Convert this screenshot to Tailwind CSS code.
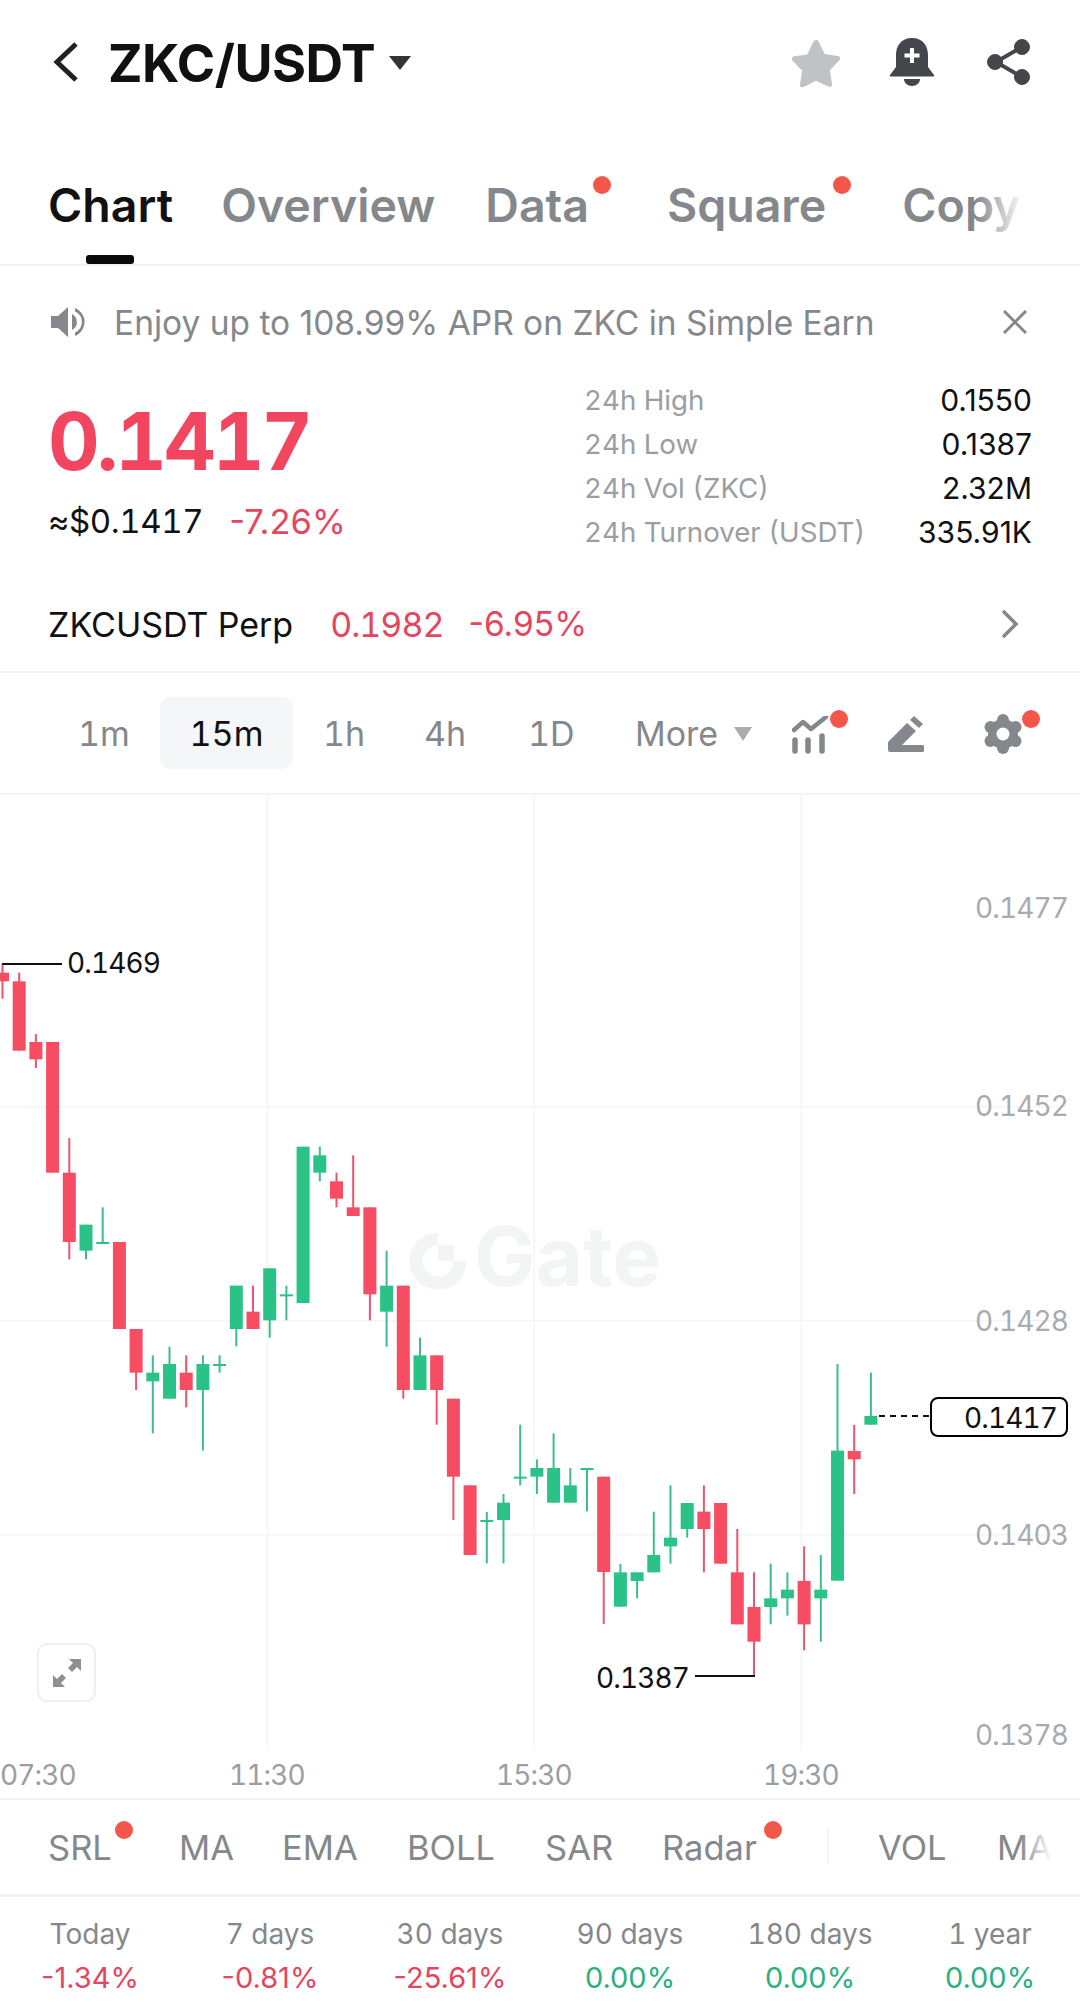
<!DOCTYPE html>
<html lang="en">
  <head>
    <meta charset="UTF-8" />
    <meta name="viewport" content="width=device-width, initial-scale=1.0" />
    <title>ZKC/USDT</title>
    <script src="https://cdn.jsdelivr.net/npm/@tailwindcss/browser@4"></script>
  </head>
  <body class="bg-white font-[Inter,sans-serif] text-[#111] tabular-nums">
    <div class="w-[1080px] h-[2002px] overflow-hidden">
      <!-- Header -->
      <div class="h-[124px] flex items-center pl-[52px] pr-[48px]">
        <svg width="28" height="42" viewBox="0 0 28 42" fill="none" stroke="#222" stroke-width="5"><path d="M24 3 L5 21 L24 39" /></svg>
        <span class="ml-[28px] mt-[3px] text-[52px] font-bold tracking-[-0.5px]">ZKC/USDT</span>
        <svg class="ml-[13px] mt-[2px]" width="24" height="16" viewBox="0 0 24 16" fill="#333"><path d="M1 1 H23 L12 15 Z" /></svg>
        <svg class="ml-auto" width="52" height="50" viewBox="0 0 24 23" fill="#c0c3c6"><path d="M12 1.2c.6 0 1 .4 1.300.9l2.700 5.700 6 .9c1.200.2 1.500 1.300.8 2l-4.400 4.600 1 6.300c.2 1.100-.8 1.700-1.700 1.200L12 20.100l-5.700 2.900c-.9.500-1.900-.1-1.700-1.200l1-6.300-4.400-4.600c-.7-.7-.4-1.800.8-2l6-.9 2.700-5.700c.3-.5.700-.9 1.300-.9z" /></svg>
        <svg class="ml-[48px]" width="44" height="48" viewBox="0 0 44 48">
          <path fill="#44464c" d="M22 0C11 0 6 8 6 17v12L0 37c-.5 1 0 1.500 1 1.500h42c1 0 1.500-.5 1-1.500l-6-8V17C38 8 33 0 22 0z" />
          <path fill="#44464c" d="M14 41h16c0 4-3.500 7-8 7s-8-3-8-7z" />
          <path fill="#fff" d="M20 10h4v5.500h5.500v4H24V25h-4v-5.500h-5.500v-4H20z" />
        </svg>
        <svg class="ml-[52px]" width="46" height="48" viewBox="0 0 46 48" fill="#44464c" stroke="#44464c">
          <path d="M36 9 L10 24 L36 39" fill="none" stroke-width="4" />
          <circle cx="36" cy="9" r="7.500" /><circle cx="9" cy="24" r="7.500" /><circle cx="36" cy="39" r="7.500" />
        </svg>
      </div>

      <!-- Tabs -->
      <div class="relative h-[142px] border-b-2 border-[#f2f3f4] pl-[48px] pt-[55px] flex items-start text-[46.500px] leading-[52px] font-semibold text-[#84888c] overflow-hidden">
        <span class="text-[#111]">Chart</span>
        <span class="ml-[48px]">Overview</span>
        <span class="ml-[50px] relative">Data<i class="absolute left-[108px] top-[-3px] w-[18px] h-[18px] rounded-full bg-[#f5564a]"></i></span>
        <span class="ml-[78px] relative">Square<i class="absolute left-[166px] top-[-3px] w-[18px] h-[18px] rounded-full bg-[#f5564a]"></i></span>
        <span class="ml-[76px]">Copy</span>
        <div class="absolute left-[975px] top-[40px] w-[50px] h-[80px] bg-gradient-to-r from-white/0 to-white"></div>
        <div class="absolute right-0 top-[40px] w-[55px] h-[80px] bg-white"></div>
        <div class="absolute left-[86px] bottom-0 w-[48px] h-[9px] rounded-[3px] bg-[#0a0a0a]"></div>
      </div>

      <!-- Notice -->
      <div class="h-[112px] flex items-center pl-[51px] pr-[53px] text-[#84888c]">
        <svg width="36" height="32" viewBox="0 0 36 32" fill="#84888c">
          <path d="M0 10h7L17 1v30L7 22H0z" />
          <path d="M21 8a9 9 0 0 1 0 16z" />
          <path d="M24 2a15 15 0 0 1 0 28v-3.500a11.500 11.500 0 0 0 0-21z" />
        </svg>
        <span class="ml-[27px] mt-[3px] text-[33.500px] normal-nums">Enjoy up to 108.99% APR on ZKC in Simple Earn</span>
        <svg class="ml-auto" width="24" height="24" viewBox="0 0 24 24" stroke="#84888c" stroke-width="3"><path d="M1 1 L23 23 M23 1 L1 23" /></svg>
      </div>

      <!-- Price block -->
      <div class="h-[200px] flex justify-between pl-[48px] pr-[48px]">
        <div>
          <div class="mt-[18px] h-[90px] leading-[90px] text-[80px] font-bold tracking-[-3px] text-[#f2455f]">0.1417</div>
          <div class="mt-[16px] h-[40px] flex items-center text-[33px]">
            <span class="tracking-[-0.4px]">≈$0.1417</span>
            <span class="ml-[26px] text-[34.500px] normal-nums text-[#e4465f]">-7.26%</span>
          </div>
        </div>
        <div class="w-[448px] text-[30px] leading-[44px] normal-nums">
          <div class="flex justify-between"><span class="text-[27.700px] tabular-nums text-[#9a9ea3]">24h High</span><span>0.1550</span></div>
          <div class="flex justify-between"><span class="text-[27.700px] tabular-nums text-[#9a9ea3]">24h Low</span><span>0.1387</span></div>
          <div class="flex justify-between"><span class="text-[27.700px] tabular-nums text-[#9a9ea3]">24h Vol (ZKC)</span><span>2.32M</span></div>
          <div class="flex justify-between"><span class="text-[27.700px] tabular-nums text-[#9a9ea3]">24h Turnover (USDT)</span><span>335.91K</span></div>
        </div>
      </div>

      <!-- Perp row -->
      <div class="h-[95px] flex items-center pl-[48px] pr-[60px] pb-[1px] border-b-2 border-[#f2f3f4] text-[34px]">
        <span>ZKCUSDT Perp</span>
        <span class="ml-[37px] tracking-[-1px] text-[#e4465f]">0.1982</span>
        <span class="ml-[25px] text-[33.500px] normal-nums text-[#e4465f]">-6.95%</span>
        <svg class="ml-auto" width="20" height="30" viewBox="0 0 20 30" fill="none" stroke="#84888c" stroke-width="3.500"><path d="M3 2 L16 15 L3 28" /></svg>
      </div>

      <!-- Timeframes -->
      <div class="relative h-[122px] flex items-center border-b-2 border-[#f2f3f4] text-[34px] text-[#84888c]">
        <span class="absolute left-[78px]">1m</span>
        <span class="absolute left-[160px] top-[24px] w-[133px] h-[72px] rounded-[10px] bg-[#f5f6f7] text-[#111] flex items-center justify-center">15m</span>
        <span class="absolute left-[323px]">1h</span>
        <span class="absolute left-[424px]">4h</span>
        <span class="absolute left-[528px]">1D</span>
        <span class="absolute left-[635px]">More</span>
        <svg class="absolute left-[734px] top-[54px]" width="18" height="14" viewBox="0 0 18 14" fill="#a9acb0"><path d="M0 0 H18 L9 14 Z" /></svg>
        <svg class="absolute left-[792px] top-[43px]" width="38" height="38" viewBox="0 0 38 38" fill="none" stroke="#84888c" stroke-linecap="round" stroke-linejoin="round">
          <path d="M2 14 L11 6 L19 13 L34 1" stroke-width="4.500" />
          <path d="M3 24 V35 M16 24 V35 M30 20 V35" stroke-width="5.500" />
        </svg>
        <i class="absolute left-[830px] top-[37px] w-[18px] h-[18px] rounded-full bg-[#f5564a]"></i>
        <svg class="absolute left-[888px] top-[43px]" width="36" height="37" viewBox="0 0 36 37" fill="#84888c">
          <path d="M22 4 L26 0 L35 8 L31 12 Z" />
          <path d="M19 7 L28 15 L14 29 H0 V26 Z" />
          <path d="M18 29 H34 a2.500 2.500 0 0 1 0 7 H2 a2 2 0 0 1 -2 -2 V29 Z" />
        </svg>
        <svg class="absolute left-[984px] top-[41px]" width="38" height="40" viewBox="0 0 38 40" fill="#84888c">
          <circle cx="19" cy="20" r="15" />
          <circle cx="19" cy="6" r="6" /><circle cx="19" cy="34" r="6" />
          <circle cx="6.500" cy="13" r="6" /><circle cx="31.500" cy="13" r="6" />
          <circle cx="6.500" cy="27" r="6" /><circle cx="31.500" cy="27" r="6" />
          <circle cx="19" cy="20" r="6.500" fill="#fff" />
        </svg>
        <i class="absolute left-[1022px] top-[37px] w-[18px] h-[18px] rounded-full bg-[#f5564a]"></i>
      </div>

      <!-- Chart canvas -->
      <div class="relative h-[1003px] overflow-hidden text-[28px] tracking-[-0.9px]">
        <svg id="chart" class="absolute left-0 top-0" width="1080" height="1003" viewBox="0 795 1080 1003"></svg>

        <!-- Watermark -->
        <svg class="absolute left-[408px] top-[437px]" width="60" height="58" viewBox="0 0 60 58" fill="none">
          <path d="M30 7 A22 22 0 1 0 52 29" stroke="#f3f4f5" stroke-width="13" />
          <rect x="30" y="13" width="16" height="16" fill="#f3f4f5" />
        </svg>
        <span class="absolute left-[474px] top-[412px] text-[82px] leading-[100px] font-bold tracking-normal text-[#f3f4f5]">Gate</span>

        <!-- Y axis -->
        <span class="absolute right-[12px] top-[92px] text-[#a8abaf]">0.1477</span>
        <span class="absolute right-[12px] top-[290px] text-[#a8abaf]">0.1452</span>
        <span class="absolute right-[12px] top-[505px] text-[#a8abaf]">0.1428</span>
        <span class="absolute right-[12px] top-[719px] text-[#a8abaf]">0.1403</span>
        <span class="absolute right-[12px] top-[919px] text-[#a8abaf]">0.1378</span>

        <!-- X axis -->
        <span class="absolute left-[0px] top-[959px] text-[#9a9ea3]">07:30</span>
        <span class="absolute left-[229px] top-[959px] text-[#9a9ea3]">11:30</span>
        <span class="absolute left-[496px] top-[959px] text-[#9a9ea3]">15:30</span>
        <span class="absolute left-[763px] top-[959px] text-[#9a9ea3]">19:30</span>

        <!-- Annotations -->
        <span class="absolute left-[67px] top-[147px]">0.1469</span>
        <span class="absolute left-[596px] top-[862px]">0.1387</span>
        <div class="absolute left-[930px] top-[602px] w-[138px] h-[40px] border-2 border-black rounded-[8px] flex items-center justify-end pr-[9px] pt-[1px]">0.1417</div>

        <!-- Expand -->
        <div class="absolute left-[37px] top-[848px] w-[59px] h-[59px] border-2 border-[#efefef] rounded-[10px] flex items-center justify-center">
          <svg width="30" height="30" viewBox="0 0 30 30" fill="#8c8f93">
            <path d="M17 1 H29 V13 L25 9 L20 14 L16 10 L21 5 Z" />
            <path d="M13 29 H1 V17 L5 21 L10 16 L14 20 L9 25 Z" />
          </svg>
        </div>
      </div>

      <!-- Indicators -->
      <div class="relative h-[99px] border-t-2 border-b-[3px] border-[#f2f3f4] text-[34.500px] text-[#84888c] overflow-hidden">
        <span class="absolute left-[48px] top-[22px]">SRL</span>
        <i class="absolute left-[115px] top-[21px] w-[18px] h-[18px] rounded-full bg-[#f5564a]"></i>
        <span class="absolute left-[179px] top-[22px]">MA</span>
        <span class="absolute left-[282px] top-[22px]">EMA</span>
        <span class="absolute left-[407px] top-[22px]">BOLL</span>
        <span class="absolute left-[545px] top-[22px]">SAR</span>
        <span class="absolute left-[662px] top-[22px]">Radar</span>
        <i class="absolute left-[764px] top-[21px] w-[18px] h-[18px] rounded-full bg-[#f5564a]"></i>
        <div class="absolute left-[827px] top-[28px] w-[2px] h-[36px] bg-[#f2f3f4]"></div>
        <span class="absolute left-[878px] top-[22px]">VOL</span>
        <span class="absolute left-[997px] top-[22px]">MA</span>
        <div class="absolute left-[1020px] top-[18px] w-[32px] h-[52px] bg-gradient-to-r from-white/0 to-white"></div>
        <div class="absolute left-[1052px] top-[18px] w-[28px] h-[52px] bg-white"></div>
      </div>

      <!-- Period changes -->
      <div class="grid grid-cols-6 pt-[15px] text-center text-[28px] leading-[44px]">
        <div><div class="text-[#84888c]">Today</div><div class="text-[29px] normal-nums text-[#e4465f]">-1.34%</div></div>
        <div><div class="text-[#84888c]">7 days</div><div class="text-[29px] normal-nums text-[#e4465f]">-0.81%</div></div>
        <div><div class="text-[#84888c]">30 days</div><div class="text-[29px] normal-nums text-[#e4465f]">-25.61%</div></div>
        <div><div class="text-[#84888c]">90 days</div><div class="text-[29px] normal-nums text-[#2bb07f]">0.00%</div></div>
        <div><div class="text-[#84888c]">180 days</div><div class="text-[29px] normal-nums text-[#2bb07f]">0.00%</div></div>
        <div><div class="text-[#84888c]">1 year</div><div class="text-[29px] normal-nums text-[#2bb07f]">0.00%</div></div>
      </div>
    </div>

    <script>
      // candles: [up, wickTop, bodyTop, bodyBottom, wickBottom], y in crop units (abs = 940 + v / 3)
      const candles = [
        [0, 72, 98, 124, 176], [0, 98, 124, 332, 332], [0, 282, 306, 358, 384], [0, 306, 306, 698, 698],
        [0, 594, 698, 906, 958], [1, 854, 854, 932, 958], [1, 802, 906, 906, 906], [0, 906, 906, 1167, 1167],
        [0, 1167, 1167, 1298, 1350], [1, 1246, 1298, 1324, 1480], [1, 1220, 1272, 1376, 1376], [0, 1246, 1298, 1350, 1402],
        [1, 1246, 1272, 1350, 1532], [1, 1246, 1272, 1272, 1298], [1, 1037, 1037, 1167, 1219], [0, 1037, 1115, 1167, 1167],
        [1, 985, 985, 1141, 1193], [1, 1037, 1063, 1063, 1141], [1, 620, 620, 1089, 1089], [1, 620, 646, 698, 724],
        [0, 698, 724, 776, 802], [0, 646, 802, 828, 828], [0, 802, 802, 1063, 1141], [1, 932, 1037, 1115, 1220],
        [0, 1037, 1037, 1350, 1376], [1, 1193, 1246, 1350, 1350], [0, 1246, 1246, 1350, 1454], [0, 1376, 1376, 1610, 1740],
        [0, 1636, 1636, 1845, 1845], [1, 1716, 1740, 1740, 1870], [1, 1662, 1688, 1740, 1870], [1, 1454, 1610, 1610, 1636],
        [1, 1558, 1584, 1610, 1662], [1, 1480, 1584, 1688, 1688], [1, 1584, 1636, 1688, 1688], [1, 1584, 1584, 1584, 1714],
        [0, 1610, 1610, 1896, 2052], [1, 1872, 1897, 2000, 2000], [1, 1897, 1897, 1923, 1975], [1, 1715, 1845, 1897, 1897],
        [1, 1636, 1793, 1819, 1871], [1, 1689, 1689, 1767, 1793], [0, 1636, 1715, 1767, 1897], [0, 1689, 1689, 1871, 1871],
        [0, 1767, 1897, 2053, 2053], [0, 1897, 2001, 2105, 2208], [1, 1871, 1975, 2001, 2053], [1, 1897, 1949, 1975, 2027],
        [0, 1819, 1923, 2053, 2131], [1, 1845, 1949, 1975, 2105], [1, 1272, 1532, 1922, 1922], [0, 1455, 1533, 1558, 1662],
        [1, 1298, 1428, 1454, 1454],
      ];
      const chart = document.getElementById("chart");
      const toY = (v) => 940 + v / 3;

      function add(tag, attrs) {
        const el = document.createElementNS("http://www.w3.org/2000/svg", tag);
        Object.entries(attrs).forEach(([k, v]) => el.setAttribute(k, v));
        chart.appendChild(el);
      }

      // grid
      [1106, 1320, 1534].forEach((y) => add("rect", { x: 0, y, width: 1067, height: 1.5, fill: "#f5f5f6" }));
      [266.7, 533.5, 800.5].forEach((x) => add("rect", { x, y: 795, width: 1.5, height: 955, fill: "#f5f5f6" }));

      candles.forEach(([up, wt, bt, bb, wb], i) => {
        const cx = 2.5 + 16.7 * i;
        const fill = up ? "#2bc287" : "#f74d63";
        add("rect", { x: cx - 1, y: toY(wt), width: 2, height: (wb - wt) / 3, fill: up ? "#3bbd8d" : "#ec5570" });
        add("rect", { x: cx - 6.5, y: toY(bt), width: 13, height: Math.max((bb - bt) / 3, 2), fill });
      });

      // high / low / last marks
      add("rect", { x: 2, y: 963, width: 60, height: 2, fill: "#111" });
      add("rect", { x: 695, y: 1675, width: 60, height: 2, fill: "#111" });
      add("line", { x1: 879, y1: 1416, x2: 931, y2: 1416, stroke: "#111", "stroke-width": 2, "stroke-dasharray": "6 5" });
    </script>
  </body>
</html>
